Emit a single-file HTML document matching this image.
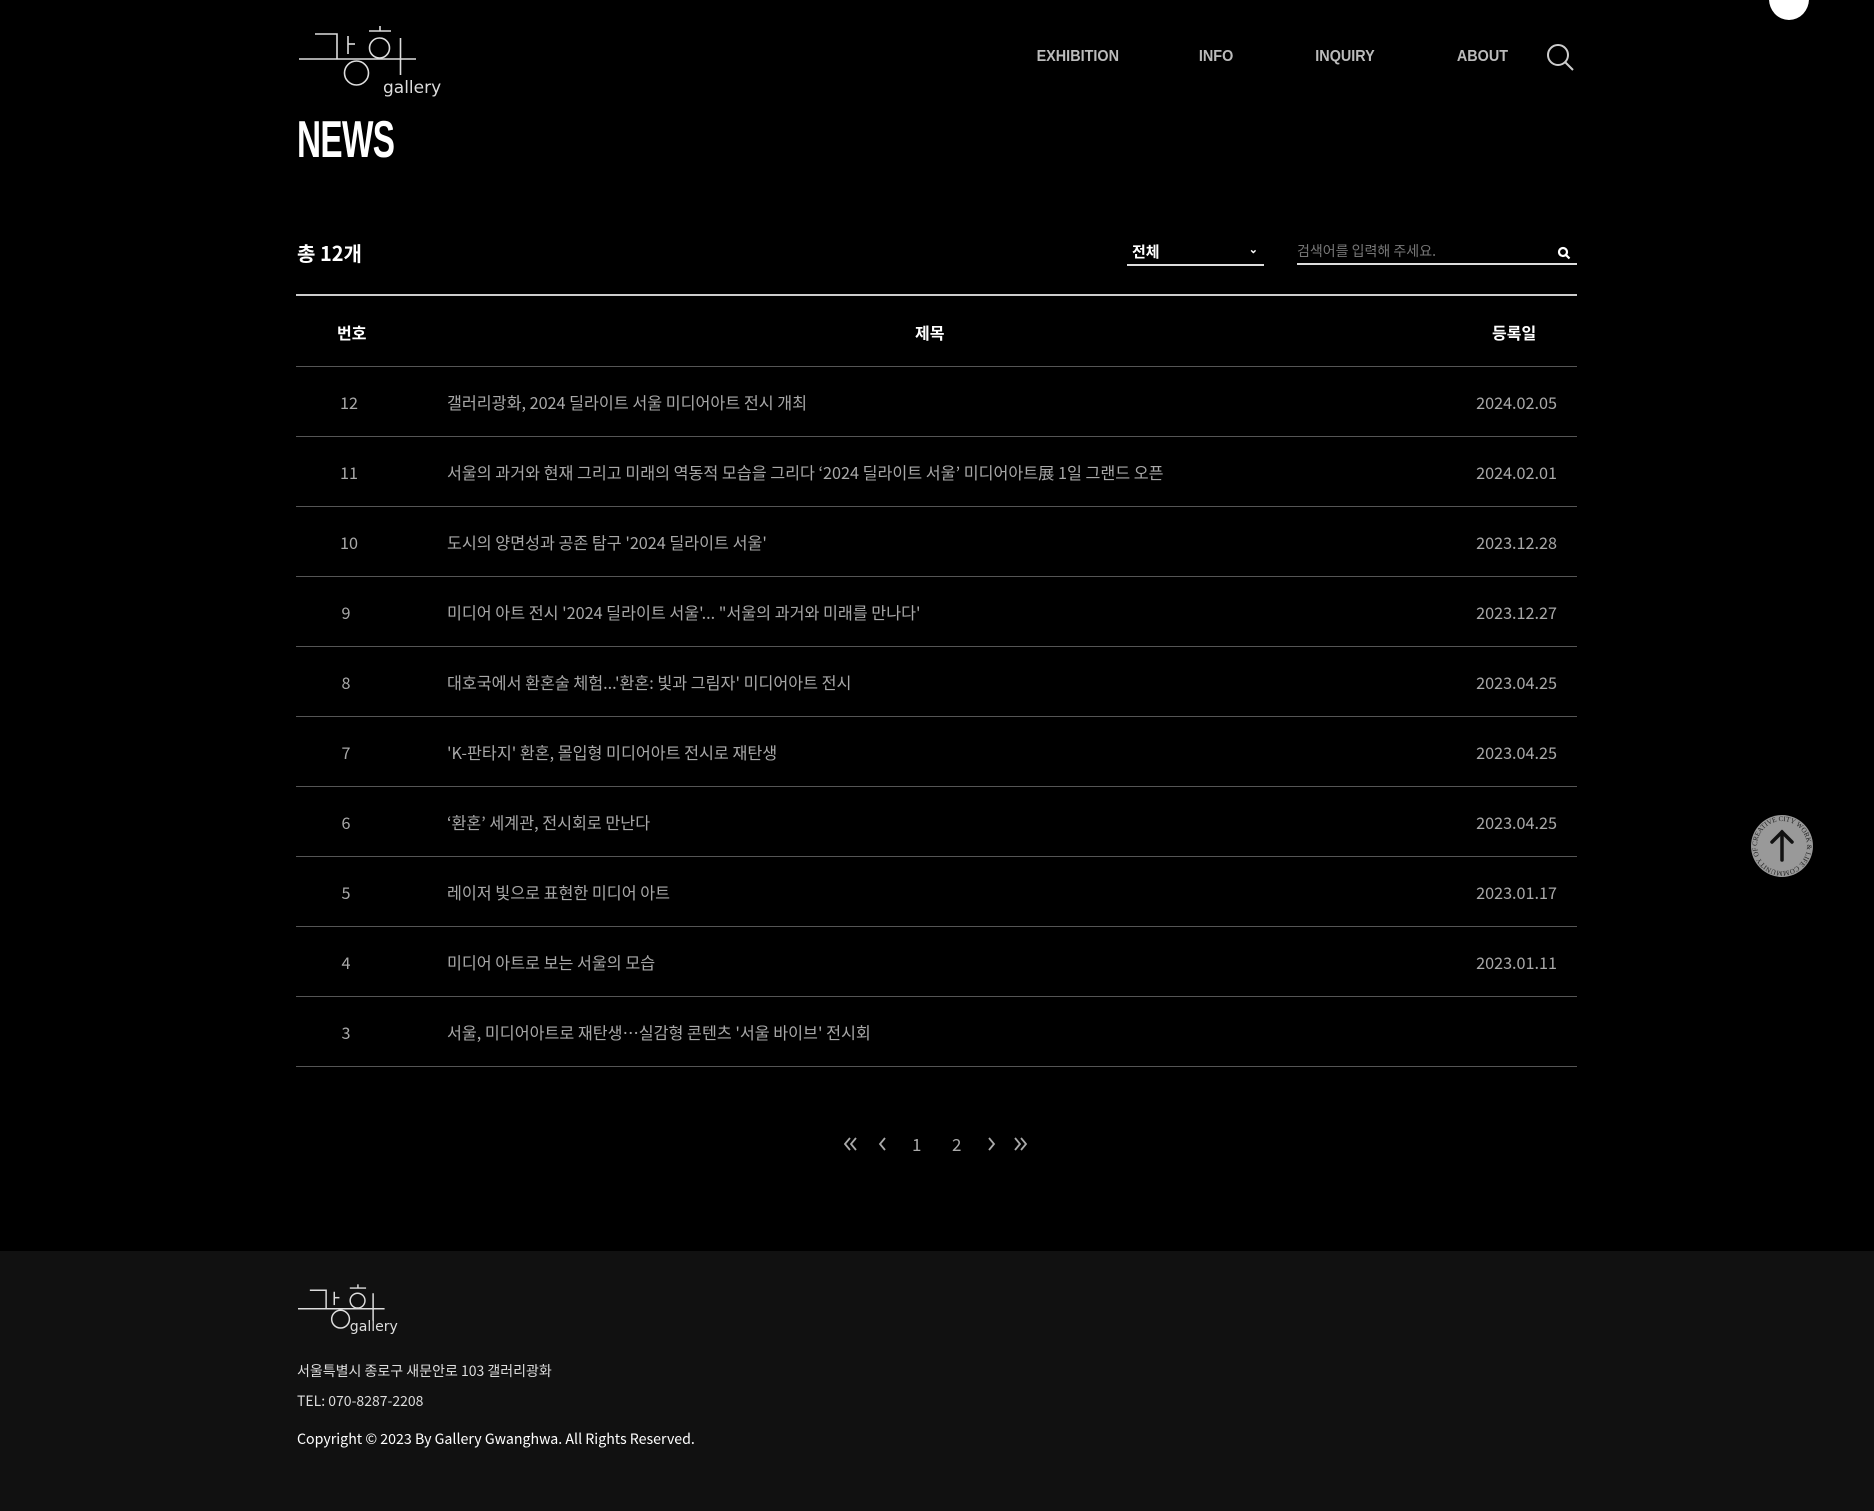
<!DOCTYPE html>
<html><head><meta charset="utf-8">
<style>
*{margin:0;padding:0;box-sizing:border-box}
body{width:1874px;height:1511px;background:#000;position:relative;overflow:hidden;font-family:"Liberation Sans","Noto Sans CJK KR",sans-serif;color:#fff}
.a{position:absolute}
.nav{position:absolute;top:48px;font-size:16px;font-weight:bold;color:#bbb;transform:scaleX(.9);transform-origin:center;letter-spacing:0}
.line{position:absolute;left:296px;width:1281px;height:1px;background:#555}
.row{position:absolute;left:296px;width:1281px;height:70px;font-size:16.2px;color:#a8a8a8;font-family:"Noto Sans CJK KR",sans-serif}
.row span{position:absolute;top:24px;line-height:24px}
.n{left:0;width:106px;text-align:center}
.t{left:151px}
.d{right:20px}
.th{position:absolute;top:320px;font-size:16px;font-weight:bold;font-family:"Noto Sans CJK KR",sans-serif}
.pg{position:absolute;top:1131px;font-size:17px;color:#aaa;font-family:"Noto Sans CJK KR",sans-serif}
.ft{position:absolute;left:297px;font-size:14px;color:#ddd;font-family:"Noto Sans CJK KR",sans-serif}
</style></head><body>

<svg class="a" style="left:299px;top:22px" width="150" height="80" viewBox="0 0 150 80" fill="none" stroke="#ddd" stroke-width="1.6">
<line x1="0" y1="37" x2="117" y2="37"/>
<polyline points="16,12 38,12 38,37"/>
<line x1="49" y1="14" x2="49" y2="32"/>
<line x1="49" y1="22" x2="56" y2="22"/>
<circle cx="57.5" cy="51" r="12"/>
<line x1="81" y1="4" x2="81" y2="9"/>
<line x1="70" y1="9" x2="92" y2="9"/>
<ellipse cx="80.5" cy="26" rx="10" ry="10"/>
<line x1="101.5" y1="16" x2="101.5" y2="53"/>
<text x="84" y="71" fill="#ddd" stroke="none" font-family="DejaVu Sans,sans-serif" font-size="17">gallery</text>
</svg>

<div class="nav" style="left:1032px">EXHIBITION</div>
<div class="nav" style="left:1197px">INFO</div>
<div class="nav" style="left:1312px">INQUIRY</div>
<div class="nav" style="left:1454px">ABOUT</div>
<svg class="a" style="left:1546px;top:43px" width="30" height="30" viewBox="0 0 30 30" fill="none" stroke="#ccc" stroke-width="2"><circle cx="12" cy="12" r="10"/><line x1="19" y1="19" x2="27" y2="27"/></svg>
<div class="a" style="left:1769px;top:-22px;width:40px;height:42px;border-radius:50%;background:#fff"></div>

<div class="a" style="left:297px;top:110px;font-size:52px;font-weight:bold;font-family:'Liberation Sans Narrow','Liberation Sans',sans-serif;transform:scaleX(.64);transform-origin:left;letter-spacing:-1px;line-height:60px">NEWS</div>

<div class="a" style="left:297px;top:238px;font-size:20px;font-weight:bold;font-family:'Noto Sans CJK KR',sans-serif">총 12개</div>

<div class="a" style="left:1127px;top:241px;width:137px;height:25px;border-bottom:2px solid #ddd;font-size:15px;font-weight:bold;font-family:'Noto Sans CJK KR',sans-serif;padding-left:5px">전체<span style="position:absolute;right:6px;top:0;font-size:11px">⌄</span></div>
<div class="a" style="left:1297px;top:241px;width:280px;height:24px;border-bottom:2px solid #ddd;font-size:14px;color:#777;font-family:'Noto Sans CJK KR',sans-serif">검색어를 입력해 주세요.
<svg style="position:absolute;right:6px;top:5px" width="14" height="14" viewBox="0 0 14 14" fill="none" stroke="#fff" stroke-width="2.2"><circle cx="6" cy="6" r="4"/><line x1="9" y1="9" x2="12.5" y2="12.5"/></svg></div>

<div class="a" style="left:296px;top:294px;width:1281px;height:2px;background:#ccc"></div>
<div class="th" style="left:337px">번호</div>
<div class="th" style="left:915px">제목</div>
<div class="th" style="left:1492px">등록일</div>
<div class="line" style="top:366px"></div>

<div class="row" style="top:366px"><span class="n">12</span><span class="t">갤러리광화, 2024 딜라이트 서울 미디어아트 전시 개최</span><span class="d">2024.02.05</span></div>
<div class="line" style="top:436px"></div>
<div class="row" style="top:436px"><span class="n">11</span><span class="t">서울의 과거와 현재 그리고 미래의 역동적 모습을 그리다 ‘2024 딜라이트 서울’ 미디어아트展 1일 그랜드 오픈</span><span class="d">2024.02.01</span></div>
<div class="line" style="top:506px"></div>
<div class="row" style="top:506px"><span class="n">10</span><span class="t">도시의 양면성과 공존 탐구 '2024 딜라이트 서울'</span><span class="d">2023.12.28</span></div>
<div class="line" style="top:576px"></div>
<div class="row" style="top:576px"><span class="n" style="width:100px">9</span><span class="t">미디어 아트 전시 '2024 딜라이트 서울'... "서울의 과거와 미래를 만나다'</span><span class="d">2023.12.27</span></div>
<div class="line" style="top:646px"></div>
<div class="row" style="top:646px"><span class="n" style="width:100px">8</span><span class="t">대호국에서 환혼술 체험...'환혼: 빛과 그림자' 미디어아트 전시</span><span class="d">2023.04.25</span></div>
<div class="line" style="top:716px"></div>
<div class="row" style="top:716px"><span class="n" style="width:100px">7</span><span class="t">'K-판타지' 환혼, 몰입형 미디어아트 전시로 재탄생</span><span class="d">2023.04.25</span></div>
<div class="line" style="top:786px"></div>
<div class="row" style="top:786px"><span class="n" style="width:100px">6</span><span class="t">‘환혼’ 세계관, 전시회로 만난다</span><span class="d">2023.04.25</span></div>
<div class="line" style="top:856px"></div>
<div class="row" style="top:856px"><span class="n" style="width:100px">5</span><span class="t">레이저 빛으로 표현한 미디어 아트</span><span class="d">2023.01.17</span></div>
<div class="line" style="top:926px"></div>
<div class="row" style="top:926px"><span class="n" style="width:100px">4</span><span class="t">미디어 아트로 보는 서울의 모습</span><span class="d">2023.01.11</span></div>
<div class="line" style="top:996px"></div>
<div class="row" style="top:996px"><span class="n" style="width:100px">3</span><span class="t">서울, 미디어아트로 재탄생…실감형 콘텐츠 '서울 바이브' 전시회</span></div>
<div class="line" style="top:1066px"></div>

<svg class="a" style="left:844px;top:1135px" width="190" height="18" viewBox="0 0 190 18" fill="none" stroke="#aaa" stroke-width="1.8">
<polyline points="6,3 1,9 6,15"/><polyline points="12,3 7,9 12,15"/>
<polyline points="41,3 36,9 41,15"/>
<polyline points="145,3 150,9 145,15"/>
<polyline points="171,3 176,9 171,15"/><polyline points="177,3 182,9 177,15"/>
</svg>
<div class="pg" style="left:912px">1</div>
<div class="pg" style="left:952px">2</div>

<div class="a" style="left:1751px;top:815px;width:62px;height:62px;border-radius:50%;background:#999">
<svg width="62" height="62" viewBox="0 0 62 62"><defs><path id="c" d="M31,31 m-25,0 a25,25 0 1,1 50,0 a25,25 0 1,1 -50,0"/></defs>
<text font-family="Liberation Serif,serif" font-size="7" fill="#222"><textPath href="#c">CREATIVE CITY WORK &amp; LIFE COMMUNITY OF</textPath></text>
<g stroke="#111" stroke-width="3.5" fill="none" stroke-linecap="round"><line x1="31" y1="17" x2="31" y2="45"/><polyline points="21,27 31,17 41,27"/></g></svg></div>

<div class="a" style="left:0;top:1251px;width:1874px;height:260px;background:#111"></div>
<svg class="a" style="left:298px;top:1281px" width="111" height="60" viewBox="0 0 150 80" fill="none" stroke="#ddd" stroke-width="2">
<line x1="0" y1="37" x2="117" y2="37"/>
<polyline points="16,12 38,12 38,37"/>
<line x1="49" y1="14" x2="49" y2="32"/>
<line x1="49" y1="22" x2="56" y2="22"/>
<circle cx="57.5" cy="51" r="12"/>
<line x1="81" y1="4" x2="81" y2="9"/>
<line x1="70" y1="9" x2="92" y2="9"/>
<ellipse cx="80.5" cy="26" rx="10" ry="10"/>
<line x1="101.5" y1="16" x2="101.5" y2="53"/>
<text x="70" y="67" fill="#ddd" stroke="none" font-family="DejaVu Sans,sans-serif" font-size="19">gallery</text>
</svg>
<div class="ft" style="top:1361px">서울특별시 종로구 새문안로 103 갤러리광화</div>
<div class="ft" style="top:1391px">TEL: 070-8287-2208</div>
<div class="ft" style="top:1429px;color:#fff;font-size:14.2px">Copyright © 2023 By Gallery Gwanghwa. All Rights Reserved.</div>
</body></html>
